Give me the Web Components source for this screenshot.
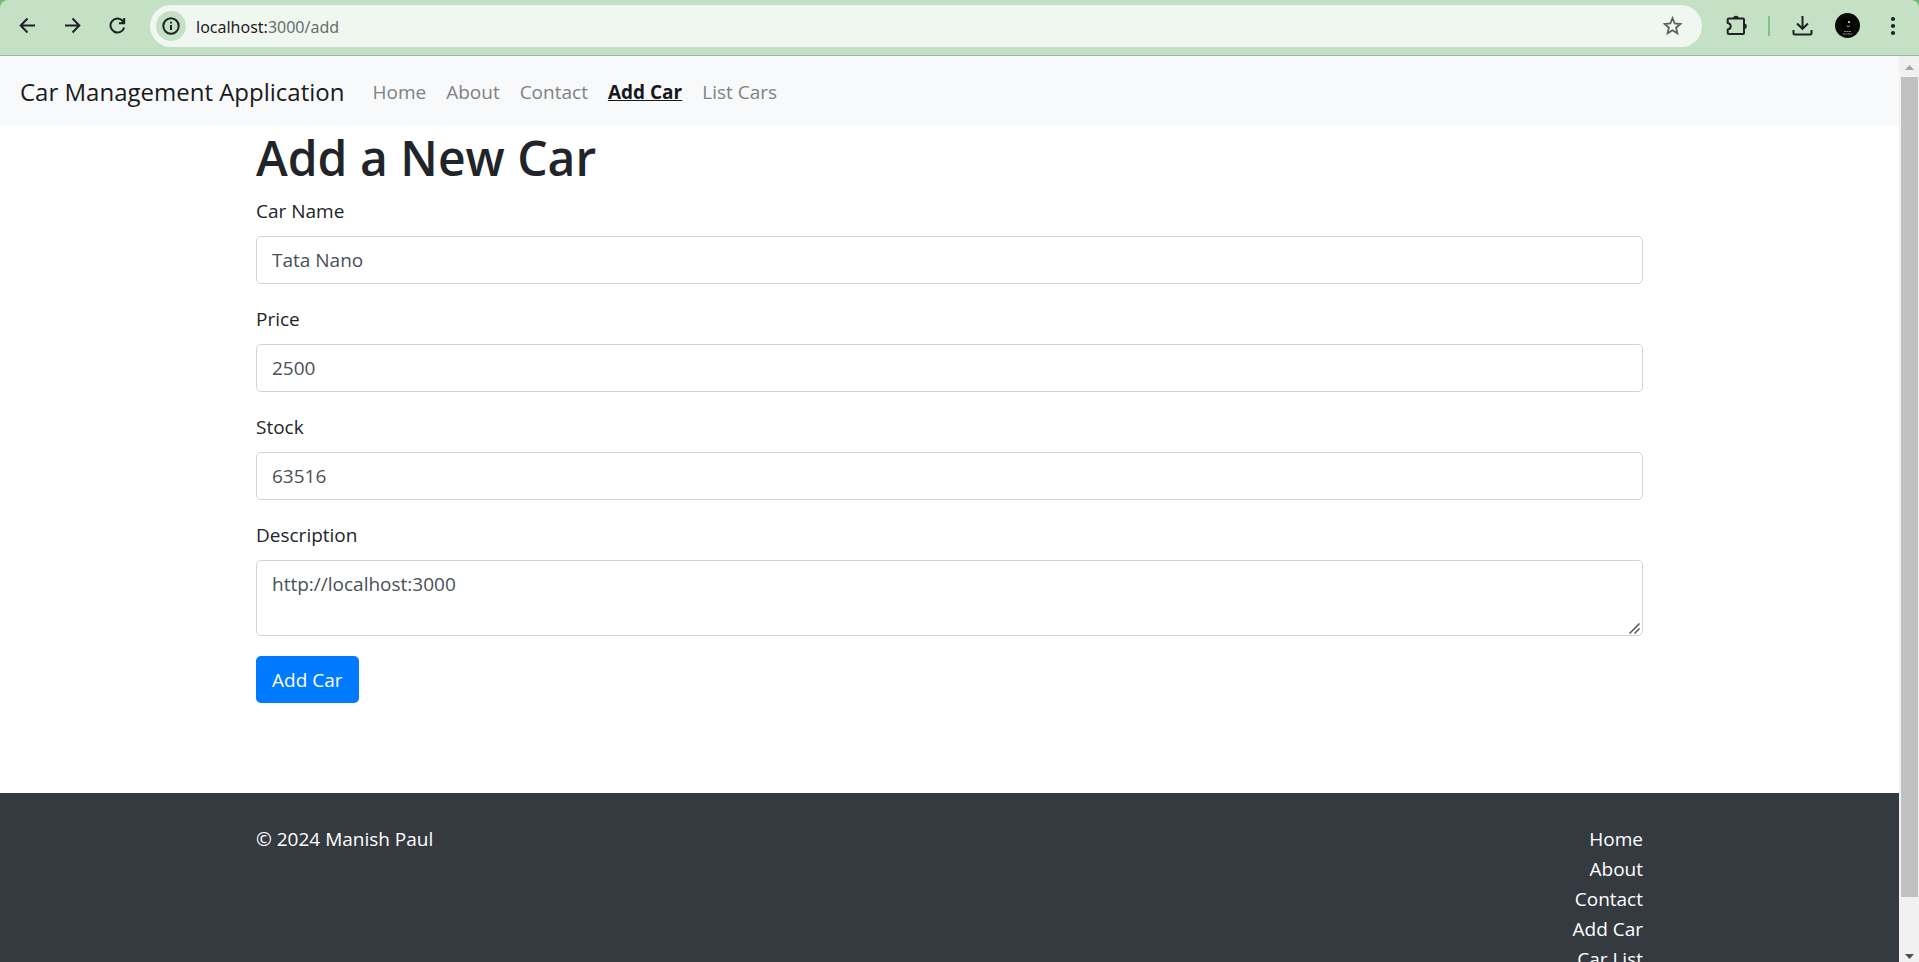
<!DOCTYPE html>
<html lang="en">
<head>
<meta charset="utf-8">
<title>Car Management Application</title>
<style>
  html, body { margin: 0; height: 100%; }
  body {
    font: 19px/30px "Open Sans", "Noto Sans", sans-serif;
    color: #212529;
    background: #fff;
    overflow: hidden;
  }
</style>
</head>
<body>
<browser-window>
  <browser-toolbar slot="toolbar" host="localhost:" path="3000/add"></browser-toolbar>
  <site-nav brand="Car Management Application">
    <nav-item href="#home">Home</nav-item>
    <nav-item href="#about">About</nav-item>
    <nav-item href="#contact">Contact</nav-item>
    <nav-item href="#add" active>Add Car</nav-item>
    <nav-item href="#list">List Cars</nav-item>
  </site-nav>
  <car-form heading="Add a New Car" action-label="Add Car">
    <form-field label="Car Name" value="Tata Nano"></form-field>
    <form-field label="Price" value="2500"></form-field>
    <form-field label="Stock" value="63516"></form-field>
    <form-field label="Description" value="http://localhost:3000" multiline></form-field>
  </car-form>
  <site-footer>
    <span slot="copyright">© 2024 Manish Paul</span>
    <footer-link href="#home">Home</footer-link>
    <footer-link href="#about">About</footer-link>
    <footer-link href="#contact">Contact</footer-link>
    <footer-link href="#add">Add Car</footer-link>
    <footer-link href="#list">Car List</footer-link>
  </site-footer>
</browser-window>

<script>
class BaseElement extends HTMLElement {
  connectedCallback() {
    if (this.shadowRoot) return;
    this.attachShadow({ mode: "open" }).innerHTML =
      "<style>*{box-sizing:border-box}</style>" + this.render();
  }
  attr(name) { return this.getAttribute(name) || ""; }
}

customElements.define("browser-window", class extends BaseElement {
  render() {
    return `<style>
      :host { display: flex; flex-direction: column; height: 100vh; }
      .view { flex: 1; min-height: 0; display: flex; }
      .page { flex: 1; min-width: 0; overflow-y: auto; scrollbar-width: none; }
    </style>
    <slot name="toolbar"></slot>
    <div class="view">
      <div class="page"><slot></slot></div>
      <scroll-track></scroll-track>
    </div>`;
  }
});

customElements.define("browser-toolbar", class extends BaseElement {
  render() {
    return `<style>
      :host { display: block; background: #6fb873; }
      .bar {
        display: flex; align-items: center; height: 56px; padding: 0 4px 4px 5px;
        background: #c5e1c5; border-bottom: 1px solid #9fb59f; border-radius: 8px 8px 0 0;
      }
      button {
        width: 45px; height: 42px; padding: 0; border: 0; background: none; color: #1f2124;
        display: flex; align-items: center; justify-content: center;
      }
      svg { display: block; fill: none; stroke: currentColor; stroke-width: 2; }
      .address {
        flex: 1; min-width: 0; height: 42px; margin: 0 12px 0 10px; padding-left: 6px;
        display: flex; align-items: center; background: #f0f7f0; border-radius: 21px;
      }
      .address .info { width: 30px; height: 30px; border-radius: 50%; background: #c5e1c5; }
      .url { flex: 1; margin-left: 10px; padding-top: 2px; font-family: "Noto Sans", sans-serif; font-size: 16px; color: #1f2124; }
      .url span { color: #65706a; }
      .address .star { color: #5b615d; margin-right: 7px; }
      .divider { width: 2px; height: 20px; margin: 0 10px 0 9px; background: #7cc282; }
    </style>
    <div class="bar">
      <button aria-label="Back"><svg width="17" height="17" viewBox="0 0 17 17"><path d="M16 8.500H2M8.500 1.500L1.700 8.500L8.500 15.500"/></svg></button>
      <button aria-label="Forward"><svg width="17" height="17" viewBox="0 0 17 17"><path d="M1 8.500H15M8.500 1.500L15.300 8.500L8.500 15.500"/></svg></button>
      <button aria-label="Reload"><svg width="17" height="17" viewBox="0 0 17 17"><path d="M15.200 10.500A7 7 0 1 1 13.600 3.700L15 5.200"/><path d="M15.200 1V6.200H10"/><path d="M15.500 2L11 6.500H15.500Z" fill="currentColor" stroke="none"/></svg></button>
      <div class="address">
        <button class="info" aria-label="Site information"><svg width="18" height="18" viewBox="0 0 18 18"><circle cx="9" cy="9" r="7.700"/><path d="M9 8V13M9 4.800V6.600"/></svg></button>
        <div class="url">${this.attr("host")}<span>${this.attr("path")}</span></div>
        <button class="star" aria-label="Bookmark"><svg width="20" height="20" viewBox="0 0 20 20"><path stroke-width="1.800" d="M9.500 2.200L11.700 7.500L17.400 8L13.100 11.700L14.400 17.300L9.500 14.300L4.600 17.300L5.900 11.700L1.600 8L7.300 7.500Z"/></svg></button>
      </div>
      <button aria-label="Extensions"><svg width="22" height="22" viewBox="0 0 22 22"><path stroke-linejoin="round" d="M3 3.500H17Q18 3.500 18 4.500V18Q18 19 17 19H3Q1.700 19 1.700 18V14.600Q4.700 14.100 4.700 11.300Q4.700 8.500 1.700 8V4.500Q1.700 3.500 3 3.500Z"/><path fill="currentColor" stroke="none" d="M7.200 3.500A2.800 2.800 0 0 1 12.800 3.500ZM18 8.500A2.800 2.800 0 0 1 18 14.100Z"/></svg></button>
      <div class="divider"></div>
      <button aria-label="Downloads"><svg width="22" height="22" viewBox="0 0 22 22"><path d="M10.500 1V13.500M5 8.500L10.500 13.800L16 8.500M1.500 15V18.500Q1.500 19.500 2.500 19.500H18.500Q19.500 19.500 19.500 18.500V15"/></svg></button>
      <button aria-label="Profile"><svg width="25" height="25" viewBox="0 0 25 25" stroke="none"><circle cx="12.500" cy="12.500" r="12.500" fill="#0b0a06" stroke="none"/><path d="M6 8Q10 3 16 6L19 16L15 20H9Z" fill="#020202" stroke="none"/><circle cx="14" cy="9" r="1" fill="#eee" stroke="none"/><path d="M11.500 13Q13 14.300 15 12.800" stroke="#999" stroke-width="1"/><path d="M9 18.500H16M8 21H17" stroke="#8b8b8b" stroke-width="1" stroke-dasharray="2 .5"/></svg></button>
      <button aria-label="Menu"><svg width="6" height="20" viewBox="0 0 6 20"><g fill="currentColor" stroke="none"><circle cx="3" cy="3" r="2.100"/><circle cx="3" cy="10" r="2.100"/><circle cx="3" cy="17" r="2.100"/></g></svg></button>
    </div>`;
  }
});

customElements.define("scroll-track", class extends BaseElement {
  render() {
    return `<style>
      :host { display: flex; flex-direction: column; width: 20px; background: #f1f1f1; }
      svg { flex: none; display: block; fill: #a3a3a3; }
      svg.down { fill: #505050; }
      .thumb { flex: 820; margin: 0 1px 0 2px; background: #c1c1c1; }
      .rest { flex: 44; }
    </style>
    <svg width="20" height="21" viewBox="0 0 20 21"><path d="M6 14L10.500 9L15 14Z"/></svg>
    <div class="thumb"></div>
    <div class="rest"></div>
    <svg class="down" width="20" height="21" viewBox="0 0 20 21"><path d="M6 13L10.500 18L15 13Z"/></svg>`;
  }
});

customElements.define("site-nav", class extends BaseElement {
  render() {
    return `<style>
      :host { display: block; background: #f8f9fa; }
      nav { display: flex; align-items: center; min-height: 70px; padding: 2px 20px 0; }
      .brand { font-size: 24px; color: #1a1b1c; text-decoration: none; margin-right: 18px; }
      .items { display: flex; }
    </style>
    <nav><a class="brand" href="#home">${this.attr("brand")}</a><div class="items"><slot></slot></div></nav>`;
  }
});

customElements.define("nav-item", class extends BaseElement {
  render() {
    return `<style>
      :host { display: block; padding: 10px; }
      a { color: #808182; text-decoration: none; }
      :host([active]) a { color: #17181a; font-weight: 700; text-decoration: underline; }
    </style>
    <a href="${this.attr("href")}"><slot></slot></a>`;
  }
});

customElements.define("car-form", class extends BaseElement {
  render() {
    return `<style>
      :host { display: block; box-sizing: border-box; max-width: 1425px; margin: 0 auto 90px; padding: 2px 19px 0; }
      h1 { margin: 0 0 8px; font-size: 48px; line-height: 60px; font-weight: 600; }
      form { display: flex; flex-direction: column; align-items: stretch; gap: 20px; }
      button {
        align-self: flex-start; height: 47px; padding: 0 16px; border: 0; border-radius: 5px;
        background: #007bff; color: #fff; font: inherit;
      }
    </style>
    <h1>${this.attr("heading")}</h1>
    <form><slot></slot><button type="button">${this.attr("action-label")}</button></form>`;
  }
});

customElements.define("form-field", class extends BaseElement {
  render() {
    const control = this.hasAttribute("multiline")
      ? `<textarea id="control" rows="2">${this.attr("value")}</textarea>`
      : `<input id="control" type="text" value="${this.attr("value")}">`;
    return `<style>
      :host { display: block; }
      label { display: block; margin-bottom: 10px; }
      input, textarea {
        display: block; width: 100%; height: 48px; margin: 0; padding: 8px 15px;
        border: 1px solid #ced4da; border-radius: 5px; background: #fff;
        color: #495057; font: inherit;
      }
      textarea { height: 76px; resize: vertical; }
      textarea::-webkit-resizer {
        background: url("data:image/svg+xml,%3Csvg xmlns='http://www.w3.org/2000/svg' width='13' height='12'%3E%3Cpath d='M.5 10.500L10.500 .5M5.500 10.500L10.500 5.500' stroke='%23555' stroke-width='1.500'/%3E%3C/svg%3E") right bottom no-repeat;
      }
    </style>
    <label for="control">${this.attr("label")}</label>${control}`;
  }
});

customElements.define("site-footer", class extends BaseElement {
  render() {
    return `<style>
      :host { display: block; background: #343a40; color: #fff; }
      footer {
        display: flex; justify-content: space-between; align-items: flex-start;
        max-width: 1425px; margin: 0 auto; padding: 31px 19px;
      }
      .links { display: flex; flex-direction: column; align-items: flex-end; }
    </style>
    <footer><slot name="copyright"></slot><div class="links"><slot></slot></div></footer>`;
  }
});

customElements.define("footer-link", class extends BaseElement {
  render() {
    return `<style>
      :host { display: block; }
      a { color: #fff; text-decoration: none; }
    </style>
    <a href="${this.attr("href")}"><slot></slot></a>`;
  }
});
</script>
</body>
</html>
